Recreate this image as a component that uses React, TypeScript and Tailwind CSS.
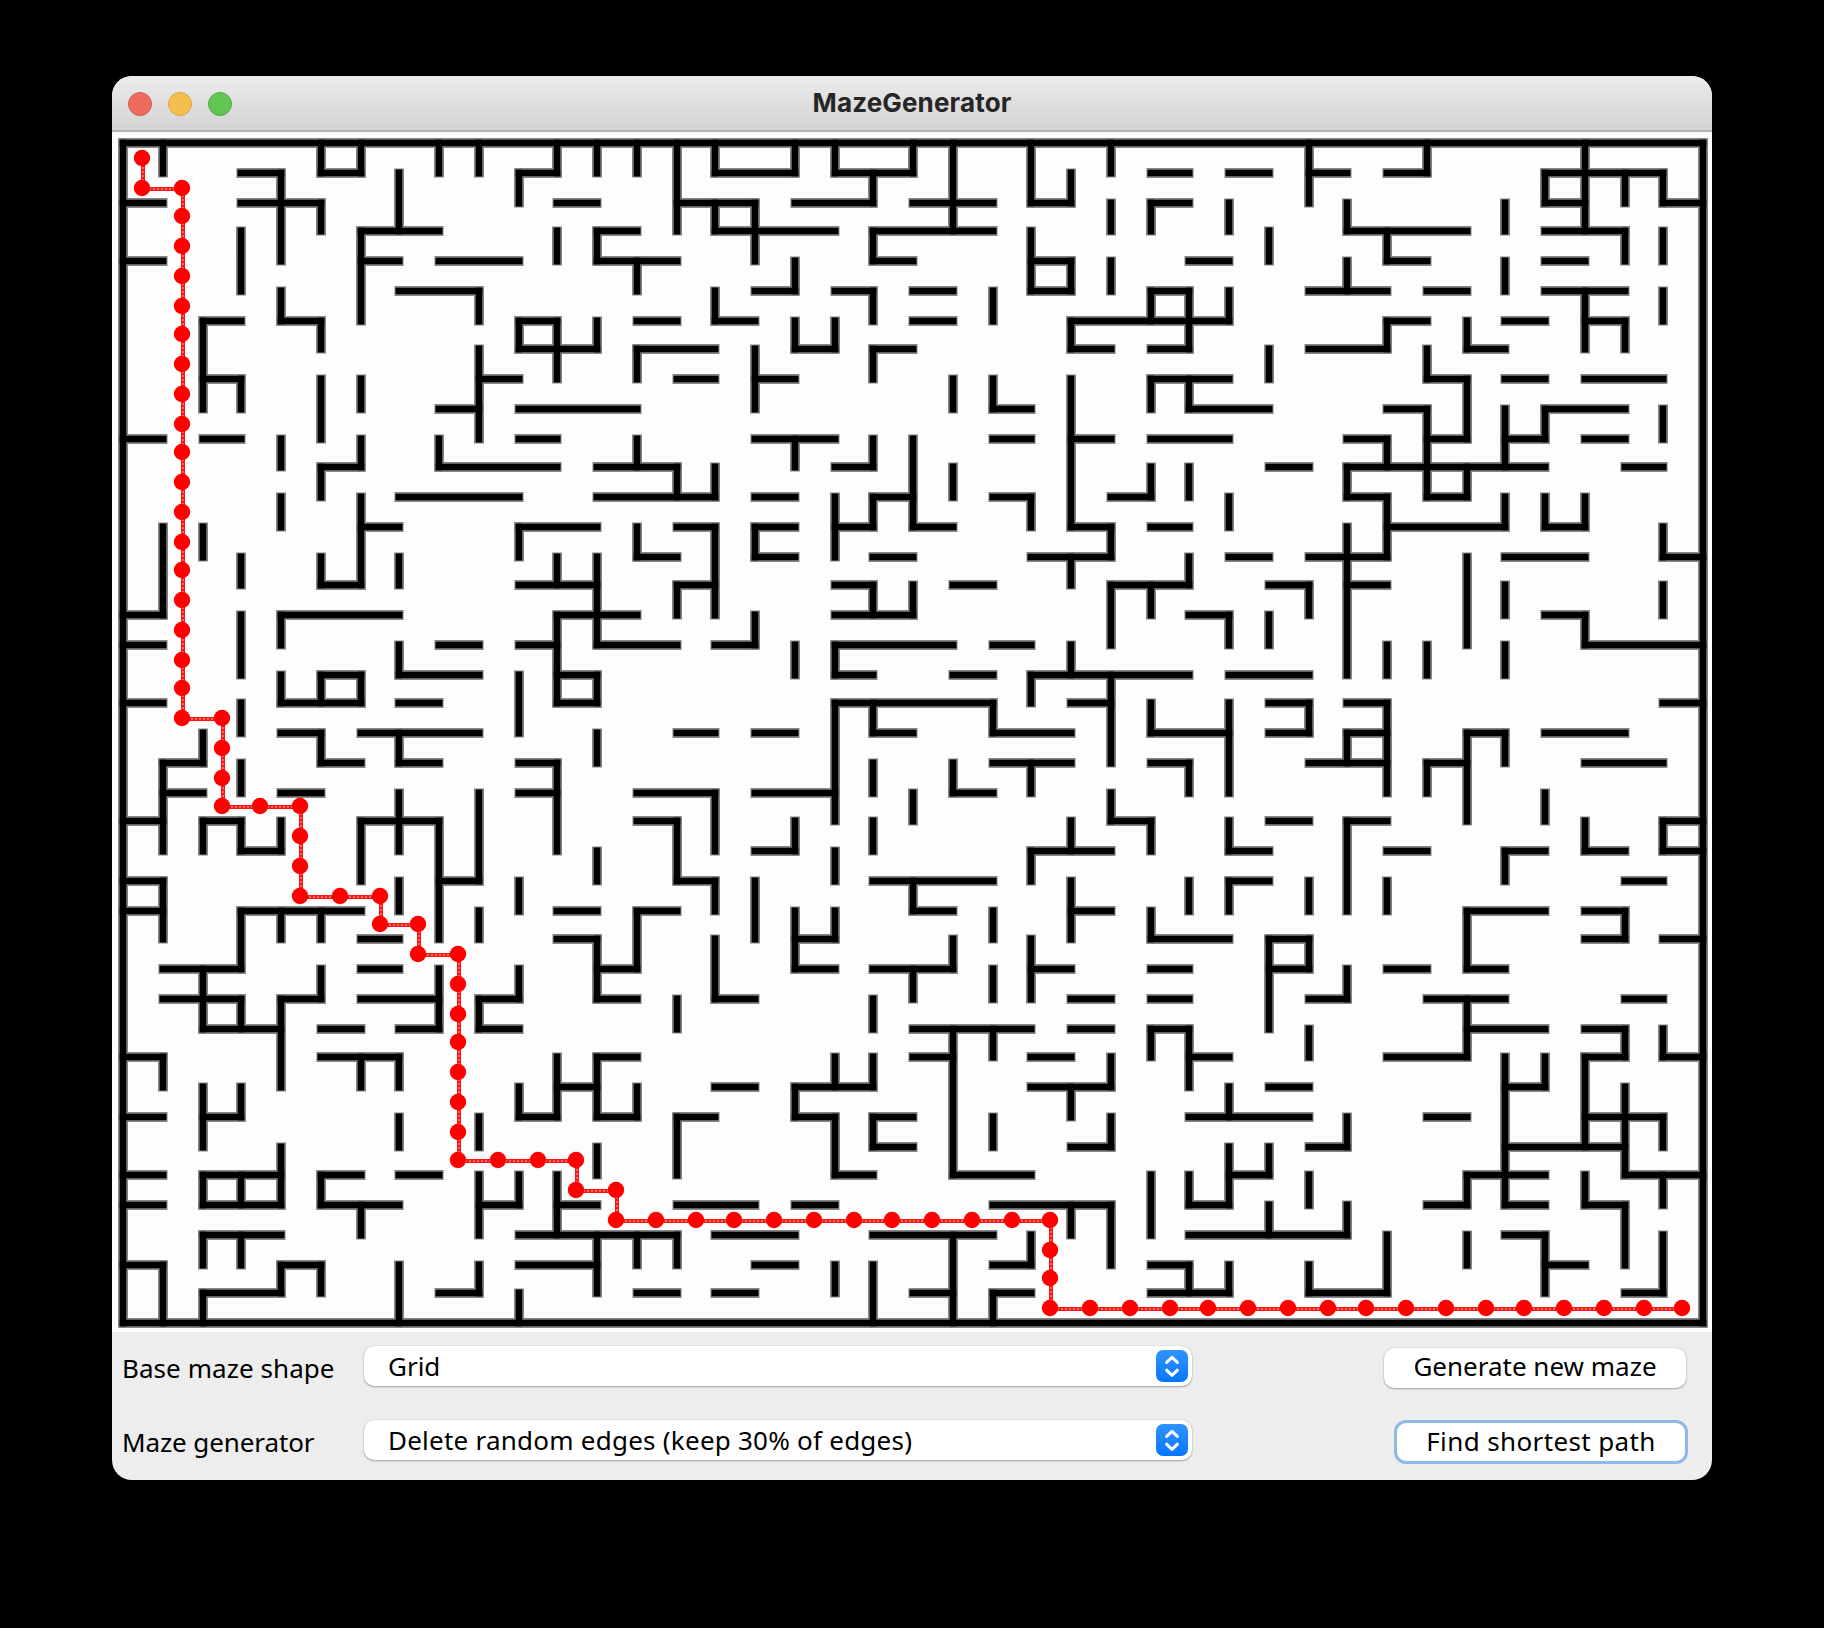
import React from "react";

/* Horizontal walls: one entry per grid line, "from-to" spans in columns. */
const ROWS: string[] = [
  "0-40",
  "3-4 5-6 10-11 15-17 18-20 26-27 28-29 30-31 32-33 36-39",
  "0-1 3-5 11-12 14-16 17-19 20-22 23-24 26-27 36-37 39-40",
  "6-8 12-13 15-18 19-22 31-34 36-38",
  "0-1 6-7 8-10 12-14 19-20 23-24 27-28 32-33 36-37",
  "7-9 16-17 18-19 20-21 23-24 26-27 30-32 33-34 36-38",
  "2-3 4-5 10-11 13-14 15-16 20-21 24-28 32-33 35-36 37-38",
  "10-12 13-15 17-18 19-20 24-25 26-27 30-32 34-35",
  "2-3 9-10 14-15 16-17 26-28 33-34 35-36 37-39",
  "8-9 10-13 22-23 27-29 32-33 36-38",
  "0-1 2-3 10-11 16-18 22-23 24-25 26-28 31-32 33-34 35-36 37-38",
  "5-6 8-11 12-14 18-19 29-30 31-36 38-39",
  "7-10 12-15 16-17 19-20 22-23 25-26 31-32 33-34",
  "6-7 10-12 14-15 16-17 18-19 20-21 24-25 26-27 32-35 36-37",
  "13-14 16-17 19-20 23-25 28-29 30-32 35-37 39-40",
  "5-6 10-12 14-15 18-19 21-22 25-27 29-30 31-32",
  "0-1 4-7 11-13 18-20 27-28 36-37",
  "0-1 8-9 10-11 12-14 15-16 18-21 22-23 37-40",
  "5-6 7-9 11-12 18-19 21-22 23-27 28-30",
  "0-1 4-6 7-8 11-12 18-22 24-25 29-30 31-32 39-40",
  "4-5 6-9 14-15 16-17 19-20 22-24 26-28 29-30 31-32 34-35 36-38",
  "1-2 5-6 7-8 10-11 22-24 26-27 30-32 33-34 37-39",
  "1-2 4-5 10-11 13-15 16-18 21-22",
  "0-1 2-3 6-8 13-14 25-26 29-30 31-32 39-40",
  "3-4 16-17 23-25 28-29 32-33 35-36 37-38 39-40",
  "0-1 8-9 14-15 19-22 28-29 38-39",
  "0-1 3-6 11-12 13-14 20-21 24-25 34-36 37-38",
  "6-7 11-12 17-18 26-28 29-30 37-38 39-40",
  "1-3 6-7 12-13 17-18 19-21 23-24 26-27 29-30 32-33 34-35",
  "1-3 4-5 6-8 9-10 12-13 15-16 24-25 26-27 30-31 33-35 38-39",
  "2-4 5-6 7-8 9-10 20-23 24-25 26-27 34-36 37-38",
  "0-1 5-7 12-13 20-21 23-24 27-28 32-34 37-38 39-40",
  "11-12 15-16 17-19 23-25 29-30 35-36",
  "0-1 2-3 10-11 12-13 14-15 17-18 19-20 27-30 33-34 37-39",
  "19-20 24-25 30-31 35-38",
  "0-1 2-4 5-6 7-8 18-19 21-23 28-29 34-36 38-40",
  "0-1 2-4 5-7 9-10 11-12 14-16 17-18 22-25 27-28 33-34 35-36 37-38",
  "2-4 10-14 15-17 19-22 27-31 35-36",
  "0-1 4-5 10-12 16-17 22-23 26-27 36-37",
  "2-4 8-9 13-14 15-16 20-21 22-23 26-28 30-32 38-39",
  "0-40",
];

/* Vertical walls: one entry per grid line, "from-to" spans in rows. */
const COLS: string[] = [
  "0-40",
  "0-1 13-16 21-24 25-27 31-32 38-40",
  "6-9 13-14 20-21 23-24 28-30 32-34 35-36 37-38 39-40",
  "3-5 8-9 14-15 16-18 19-20 21-22 23-24 26-28 29-30 32-33 35-36 37-38",
  "1-4 5-6 10-11 12-13 16-17 18-19 23-24 26-27 29-32 34-36 38-39",
  "0-1 2-3 6-7 8-10 11-12 14-15 18-19 20-21 26-27 28-29 35-36 38-39",
  "0-1 3-6 8-9 10-11 12-15 18-19 23-25 31-32 36-37",
  "1-3 14-15 17-18 20-21 22-24 25-26 31-32 33-34 38-40",
  "0-1 10-11 23-27 28-30",
  "0-1 5-6 7-10 22-25 26-27 29-30 33-34 35-37 38-39",
  "1-2 6-7 13-14 18-20 25-26 28-29 32-33 35-36 39-40",
  "0-1 3-4 6-8 14-15 16-19 21-24 31-33 35-37",
  "0-1 3-4 6-7 14-17 18-19 20-21 24-25 27-29 31-33 34-35 37-39",
  "0-1 4-5 7-8 10-11 13-14 26-28 32-33 37-38",
  "0-3 11-12 15-16 23-25 29-30 33-35 37-38",
  "0-1 2-3 5-6 11-12 13-16 22-24 25-26 27-29",
  "2-4 7-9 13-14 16-17 25-27",
  "0-1 4-5 6-7 10-11 17-18 23-24 26-28 32-33",
  "0-1 6-7 12-14 17-18 19-23 24-25 26-27 31-32 33-35 38-39",
  "1-2 3-4 5-6 7-8 10-11 12-13 15-16 19-20 21-22 23-24 29-30 31-32 33-34 38-40",
  "0-1 10-13 15-16 22-23 25-26 28-29",
  "0-3 8-9 11-12 21-22 27-28 30-35 37-40",
  "5-6 8-9 19-20 26-27 28-29 30-31 33-34 39-40",
  "0-2 3-5 12-13 18-19 21-22 24-25 27-29 37-38",
  "1-2 4-5 6-7 8-13 14-15 17-18 23-24 25-27 32-33 36-37",
  "0-1 2-3 4-5 13-14 15-17 18-21 22-23 31-32 33-34 36-38",
  "2-3 5-6 8-9 11-12 15-16 19-20 23-24 26-27 30-31 35-37",
  "5-7 8-9 11-12 14-15 21-22 25-26 30-32 35-36 38-39",
  "2-3 5-6 12-13 16-17 19-22 23-24 25-26 32-33 34-36 38-39",
  "3-4 7-8 16-17 27-30 34-35 36-37",
  "0-2 15-16 19-20 25-26 27-28 30-31 35-36 38-39",
  "2-3 4-5 11-12 13-18 20-21 23-26 28-29 33-34 36-37",
  "3-4 6-7 10-11 12-14 17-18 19-22 25-26 37-39",
  "0-1 7-8 9-12 17-18 21-22",
  "6-7 8-10 11-12 14-17 20-23 26-28 29-31 35-36 37-38",
  "2-3 4-5 9-11 12-13 15-16 17-18 20-21 24-25 31-36",
  "1-2 9-10 12-13 22-23 31-32 37-39",
  "0-3 5-7 12-13 16-17 23-24 31-34 35-36",
  "1-2 3-4 6-7 26-27 30-31 32-35 36-38",
  "1-2 3-4 5-6 9-10 13-14 15-16 23-24 30-31 33-34 35-36 37-39",
  "0-40",
];

/* Corner cells of the solution, [column, row]. */
const TURNS: [number, number][] = [
  [0, 0], [0, 1], [1, 1], [1, 19], [2, 19], [2, 22], [4, 22], [4, 25], [6, 25],
  [6, 26], [7, 26], [7, 27], [8, 27], [8, 34], [11, 34], [11, 35], [12, 35],
  [12, 36], [23, 36], [23, 39], [39, 39],
];

const gx = (i: number) => 11 + 2 * Math.round(19.75 * i);
const gy = (j: number) => 11 + 2 * Math.round(14.75 * j);
const dotX = (c: number) => gx(c) + 19;
const dotY = (r: number) => 11 + 2 * Math.floor(14.75 * r + 7.375) + 1;

const spans = (line: string) => line.split(" ").map((s) => s.split("-").map(Number));

function wallPath(cap: number) {
  let d = "";
  ROWS.forEach((line, j) =>
    spans(line).forEach(([a, b]) => {
      d += `M${gx(a) - cap} ${gy(j)}H${gx(b) + cap}`;
    }),
  );
  COLS.forEach((line, i) =>
    spans(line).forEach(([a, b]) => {
      d += `M${gx(i)} ${gy(a) - cap}V${gy(b) + cap}`;
    }),
  );
  return d;
}

function solutionCells() {
  const cells: [number, number][] = [TURNS[0]];
  for (let k = 1; k < TURNS.length; k++) {
    let [c, r] = TURNS[k - 1];
    const [tc, tr] = TURNS[k];
    while (c !== tc || r !== tr) {
      c += Math.sign(tc - c);
      r += Math.sign(tr - r);
      cells.push([c, r]);
    }
  }
  return cells;
}

function Maze() {
  const cells = solutionCells();
  const route = "M" + TURNS.map(([c, r]) => `${dotX(c) + 1} ${dotY(r) + 1}`).join("L");
  return (
    <svg width="1600" height="1200" viewBox="0 0 1600 1200" className="block">
      <path d={wallPath(4.5)} stroke="#858585" strokeWidth="10" fill="none" />
      <path d={wallPath(3.5)} stroke="#000" strokeWidth="6.6" fill="none" />
      <path d={route} stroke="#ff1414" strokeWidth="4" fill="none" />
      <path d={route} stroke="#ff8585" strokeWidth="1.4" strokeDasharray="2 2" fill="none" />
      {cells.map(([c, r]) => (
        <circle key={`${c}-${r}`} cx={dotX(c)} cy={dotY(r)} r="8.2" fill="#ff0000" />
      ))}
    </svg>
  );
}

function ComboBox({ children }: { children: React.ReactNode }) {
  return (
    <div className="flex h-10 w-[828px] items-center rounded-[10px] bg-white pr-1 pl-6 shadow-[0_0_1px_rgba(0,0,0,0.3),0_1px_2px_rgba(0,0,0,0.3)]">
      <span className="flex-1">{children}</span>
      <span className="flex size-8 items-center justify-center rounded-[7px] bg-gradient-to-b from-[#2f93ff] to-[#0377ff]">
        <svg width="32" height="32" viewBox="0 0 32 32" fill="none" stroke="#fff" strokeWidth="3" strokeLinecap="round" strokeLinejoin="round">
          <path d="M10.6 12.4 16 7.3l5.4 5.1M10.6 20.2 16 25.3l5.4-5.1" />
        </svg>
      </span>
    </div>
  );
}

export default function App() {
  return (
    <div className="h-[1628px] w-[1824px] bg-black pt-[76px] pl-[112px] text-black">
      <div className="h-[1404px] w-[1600px] overflow-hidden rounded-[20px] bg-[#ededed]">
        <header className="grid h-14 grid-cols-[1fr_auto_1fr] items-center border-b-2 border-[#b4b4b4] bg-gradient-to-b from-[#ececec] to-[#d3d3d3] px-4">
          <div className="flex gap-4 pt-0.5">
            <span className="size-6 rounded-full border border-[#d5594d] bg-[#ed6a5e]" />
            <span className="size-6 rounded-full border border-[#dca73c] bg-[#f5bf4f]" />
            <span className="size-6 rounded-full border border-[#50ac43] bg-[#61c554]" />
          </div>
          <h1 className="font-['Inter',sans-serif] text-[26px] leading-none font-bold tracking-[0.15px] text-[#262626]">
            MazeGenerator
          </h1>
          <div />
        </header>
        <main className="h-[1200px] bg-[#fdfdfd]">
          <Maze />
        </main>
        <footer className="h-[148px] pt-3.5 pl-2.5 font-['Noto_Sans',sans-serif] text-[26px] leading-10 whitespace-nowrap">
          <div className="flex h-10">
            <label className="w-[242px] pt-0.5 tracking-[0.06px]">Base maze shape</label>
            <ComboBox>Grid</ComboBox>
            <button className="mt-0.5 ml-[192px] h-10 w-[302px] rounded-[10px] bg-white pb-1 leading-9 shadow-[0_0_1px_rgba(0,0,0,0.3),0_1px_2px_rgba(0,0,0,0.3)]">
              Generate new maze
            </button>
          </div>
          <div className="mt-[34px] flex h-10">
            <label className="w-[242px] pt-0.5 tracking-[-0.1px]">Maze generator</label>
            <ComboBox>
              <span className="tracking-[0.24px]">Delete random edges (keep 30% of edges)</span>
            </ComboBox>
            <button className="ml-[202px] h-11 w-[294px] rounded-[12px] border-[3px] border-[#8fb8e8] bg-white pb-0.5 leading-9 tracking-[0.38px]">
              Find shortest path
            </button>
          </div>
        </footer>
      </div>
    </div>
  );
}
